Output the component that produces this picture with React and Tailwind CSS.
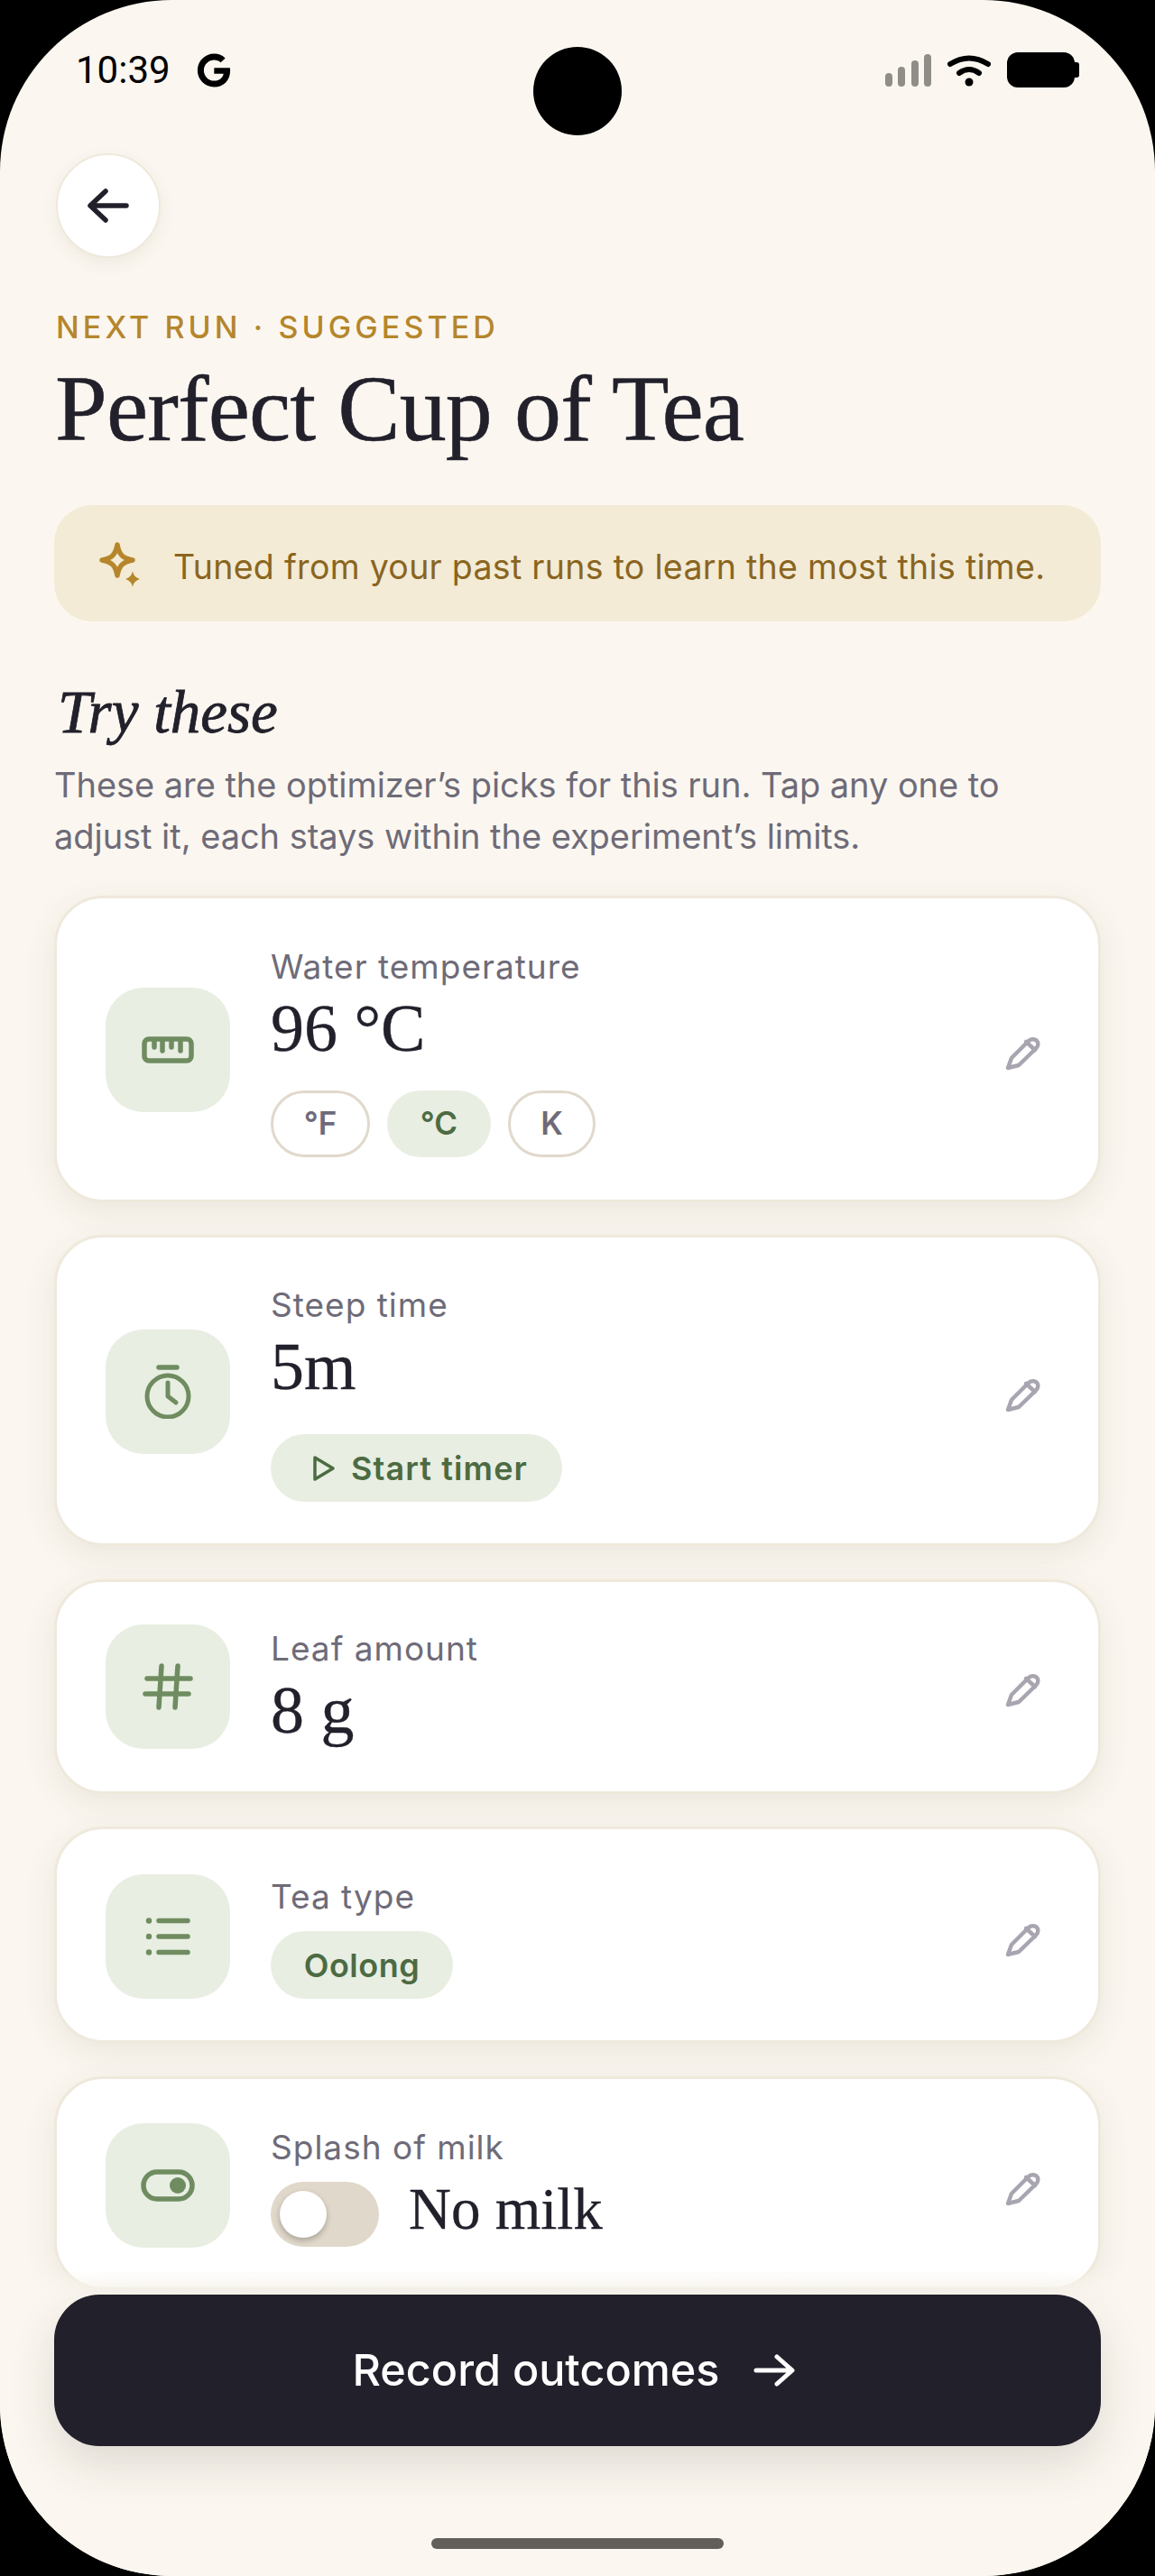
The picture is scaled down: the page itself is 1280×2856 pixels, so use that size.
import { FaGoogle } from "react-icons/fa";

const sans = "font-['Inter',sans-serif]";
const serif = "font-['Liberation_Serif',serif]";

function Ruler() {
  return (
    <svg width="58" height="30" viewBox="0 0 58 30" fill="none" stroke="#6f8c60" strokeWidth="5.5" strokeLinecap="round">
      <rect x="3" y="3" width="52" height="24" rx="5" />
      <path d="M14 4v8M23 4v12M33 4v8M43 4v12" />
    </svg>
  );
}

function Timer() {
  return (
    <svg width="52" height="60" viewBox="0 0 52 60" fill="none" stroke="#6f8c60" strokeWidth="5" strokeLinecap="round" strokeLinejoin="round">
      <path d="M16 3h20" strokeWidth="5.5" />
      <circle cx="26" cy="35" r="23" />
      <path d="M26 20v15l9 7" />
    </svg>
  );
}

function Hash() {
  return (
    <svg width="56" height="52" viewBox="0 0 56 52" fill="none" stroke="#6f8c60" strokeWidth="5.5" strokeLinecap="round">
      <path d="M5 17h48M3 34h48M21 3l-3 46M39 3l-3 46" />
    </svg>
  );
}

function ListIcon() {
  return (
    <svg width="50" height="46" viewBox="0 0 50 46" fill="none" stroke="#6f8c60" strokeWidth="5.5" strokeLinecap="round">
      <path d="M15 5.5h32M15 23h32M15 40.5h32" />
      <g fill="#6f8c60" stroke="none">
        <circle cx="4" cy="5.5" r="3.2" />
        <circle cx="4" cy="23" r="3.2" />
        <circle cx="4" cy="40.5" r="3.2" />
      </g>
    </svg>
  );
}

function ToggleIcon() {
  return (
    <svg width="60" height="36" viewBox="0 0 60 36" fill="none" stroke="#6f8c60" strokeWidth="5.5">
      <rect x="3" y="3" width="54" height="30" rx="15" />
      <circle cx="41" cy="18" r="9" fill="#6f8c60" stroke="none" />
    </svg>
  );
}

function Pencil() {
  return (
    <svg className="mt-[8px]" width="40" height="38" viewBox="0 0 40 38" fill="none" stroke="#a9a5b0" strokeWidth="4.5" strokeLinecap="round" strokeLinejoin="round">
      <path d="M8 24L27 5c3-2.5 8-2.500 10 1.500 1 3 0 5-2 7L16 32l-12 3 4-11z" />
      <path d="M24 6l10 9" />
    </svg>
  );
}

function Card({ icon, label, className, children }) {
  return (
    <div className={`flex items-center rounded-[54px] border-[3px] border-[#efe9dc] bg-white pl-[54px] pr-[64px] shadow-[0_10px_36px_rgba(70,55,30,0.09)] ${className}`}>
      <div className="flex h-[138px] w-[138px] shrink-0 items-center justify-center rounded-[42px] bg-[#e8eee2]">
        {icon}
      </div>
      <div className="ml-[45px] flex-1">
        <div className={`${sans} h-[52px] text-[37px] leading-[52px] tracking-[1px] text-[#6e6b78]`}>{label}</div>
        {children}
      </div>
      <Pencil />
    </div>
  );
}

function Value({ children }) {
  return <div className={`${serif} h-[84px] text-[74px] leading-[84px] text-[#22202b] [-webkit-text-stroke:0.3px_#22202b]`}>{children}</div>;
}

function Chip({ children, active, width }) {
  return (
    <div className={`${sans} flex h-[74px] items-center justify-center rounded-full text-[35px] font-semibold ${width} ${active ? "bg-[#e8eee2] text-[#4d6b42]" : "border-[3px] border-[#e0d9cc] text-[#6e6b78]"}`}>
      {children}
    </div>
  );
}

export default function App() {
  return (
    <div className="h-screen overflow-hidden bg-black">
      <div className="relative h-full overflow-hidden rounded-[190px] bg-[#fbf7f0]">
        {/* camera */}
        <div className="absolute left-[591px] top-[52px] h-[98px] w-[98px] rounded-full bg-black" />

        {/* status bar */}
        <div className="flex h-[170px] items-start justify-between pl-[84px] pr-[84px] pt-[58px]">
          <div className="flex items-center gap-[29px]">
            <span className="font-['Roboto',sans-serif] text-[42px] leading-[40px] text-black">10:39</span>
            <FaGoogle size={38} color="#000" />
          </div>
          <div className="flex items-center">
            <div className="flex items-end gap-[6.500px]">
              <div className="h-[15px] w-[8px] rounded-full bg-[#8f8d88]" />
              <div className="h-[22px] w-[8px] rounded-full bg-[#8f8d88]" />
              <div className="h-[29px] w-[8px] rounded-full bg-[#8f8d88]" />
              <div className="h-[36px] w-[8px] rounded-full bg-[#8f8d88]" />
            </div>
            <svg className="ml-[18px]" width="48" height="36" viewBox="0 0 48 36" fill="none" stroke="#000" strokeWidth="6" strokeLinecap="round">
              <path d="M3 11Q24 -2 45 11" />
              <path d="M13 21Q24 13 35 21" />
              <circle cx="24" cy="31" r="4.500" fill="#000" stroke="none" />
            </svg>
            <div className="ml-[18px] h-[39px] w-[75px] rounded-[12px] bg-black" />
            <div className="h-[17px] w-[5px] rounded-r-[3px] bg-black" />
          </div>
        </div>

        <div className="px-[60px]">
          <div className="ml-[2px] flex h-[116px] w-[116px] items-center justify-center rounded-full border-[2px] border-[#efe9dc] bg-white shadow-[0_6px_18px_rgba(70,55,30,0.07)]">
            <svg width="46" height="38" viewBox="0 0 46 38" fill="none" stroke="#22202b" strokeWidth="5.5" strokeLinecap="round" strokeLinejoin="round">
              <path d="M43 19H4M20 3L3 19l17 16" />
            </svg>
          </div>

          <div className={`${sans} mt-[57px] ml-[2px] text-[34px] leading-[40px] font-medium tracking-[4.100px] text-[#b5862b]`}>NEXT RUN · SUGGESTED</div>
          <h1 className={`${serif} mt-[14px] ml-[1px] text-[104px] leading-[112px] tracking-[-0.9px] text-[#22202b] [-webkit-text-stroke:0.5px_#22202b]`}>Perfect Cup of Tea</h1>

          <div className="mt-[51px] flex h-[129px] items-center rounded-[42px] bg-[#f3ebd6] pl-[47px] pt-[5px]">
            <svg width="50" height="52" viewBox="0 0 50 52" fill="none">
              <path d="M23 3c2 11 6 15 17 17-11 2-15 6-17 17-2-11-6-15-17-17 11-2 15-6 17-17z" stroke="#b5862b" strokeWidth="5.500" strokeLinejoin="round" />
              <path d="M40 32c1 5 3 7 8 9-5 2-7 4-8 9-1-5-3-7-8-9 5-2 7-4 8-9z" fill="#b5862b" />
            </svg>
            <span className={`${sans} ml-[35px] pt-[5px] text-[37.500px] tracking-[0.3px] text-[#8a6520]`}>Tuned from your past runs to learn the most this time.</span>
          </div>

          <h2 className={`${serif} mt-[62px] ml-[4px] text-[67px] leading-[76px] italic text-[#22202b] [-webkit-text-stroke:0.8px_#22202b]`}>Try these</h2>
          <p className={`${sans} mt-[15px] max-w-[1110px] text-[38px] leading-[57px] tracking-[-0.05px] text-[#6e6b78]`}>
            These are the optimizer’s picks for this run. Tap any one to adjust it, each stays within the experiment’s limits.
          </p>

          <div className="mt-[36.500px] flex flex-col gap-[36.500px]">
            <Card icon={<Ruler />} label="Water temperature" className="pt-[50px] pb-[47px]">
              <Value>96 °C</Value>
              <div className="mt-[27px] flex gap-[19px]">
                <Chip width="w-[110px]">°F</Chip>
                <Chip active width="w-[115px]">°C</Chip>
                <Chip width="w-[97px]">K</Chip>
              </div>
            </Card>

            <Card icon={<Timer />} label="Steep time" className="pt-[49px] pb-[46px]">
              <Value>5m</Value>
              <div className={`${sans} mt-[33px] flex h-[75px] w-[323px] items-center rounded-full bg-[#e8eee2] pl-[46px] text-[36px] font-semibold tracking-[1.100px] text-[#4d6b42]`}>
                <svg width="26" height="30" viewBox="0 0 26 30" fill="none" stroke="#4d6b42" strokeWidth="3.500" strokeLinejoin="round">
                  <path d="M3 3l20 12L3 27z" />
                </svg>
                <span className="ml-[17px]">Start timer</span>
              </div>
            </Card>

            <Card icon={<Hash />} label="Leaf amount" className="py-[47px]">
              <Value>8 g</Value>
            </Card>

            <Card icon={<ListIcon />} label="Tea type" className="pt-[49px] pb-[46px]">
              <div className={`${sans} mt-[12px] flex h-[75px] w-[202px] items-center justify-center rounded-full bg-[#e8eee2] text-[36px] font-semibold tracking-[0.5px] text-[#4d6b42]`}>Oolong</div>
            </Card>

            <Card icon={<ToggleIcon />} label="Splash of milk" className="pt-[49px] pb-[44px]">
              <div className="mt-[12px] flex h-[72px] items-center">
                <div className="flex h-[72px] w-[120px] items-center rounded-full bg-[#e0d8ca] pl-[10px]">
                  <div className="h-[52px] w-[52px] rounded-full bg-white shadow-[0_3px_6px_rgba(0,0,0,0.25)]" />
                </div>
                <span className={`${serif} ml-[33px] pb-[10px] text-[65px] text-[#22202b] [-webkit-text-stroke:0.3px_#22202b]`}>No milk</span>
              </div>
            </Card>
          </div>
        </div>

        {/* sticky footer */}
        <div className="absolute inset-x-0 bottom-0 h-[340px] bg-gradient-to-b from-[#fbf7f000] to-[#fbf7f0] to-[8%]">
          <div className="mx-[60px] mt-[28px] flex h-[168px] items-center justify-center rounded-[50px] bg-[#22202b] pr-[8px] shadow-[0_20px_50px_rgba(50,40,30,0.14)]">
            <span className={`${sans} text-[48.500px] font-medium text-white`}>Record outcomes</span>
            <svg className="ml-[38px]" width="46" height="36" viewBox="0 0 46 36" fill="none" stroke="#fff" strokeWidth="5" strokeLinecap="round" strokeLinejoin="round">
              <path d="M3 18h39M26 3l17 15-17 15" />
            </svg>
          </div>
        </div>

        {/* home indicator */}
        <div className="absolute bottom-[30px] left-[478px] h-[12px] w-[324px] rounded-full bg-[#625f5a]" />
      </div>
    </div>
  );
}
